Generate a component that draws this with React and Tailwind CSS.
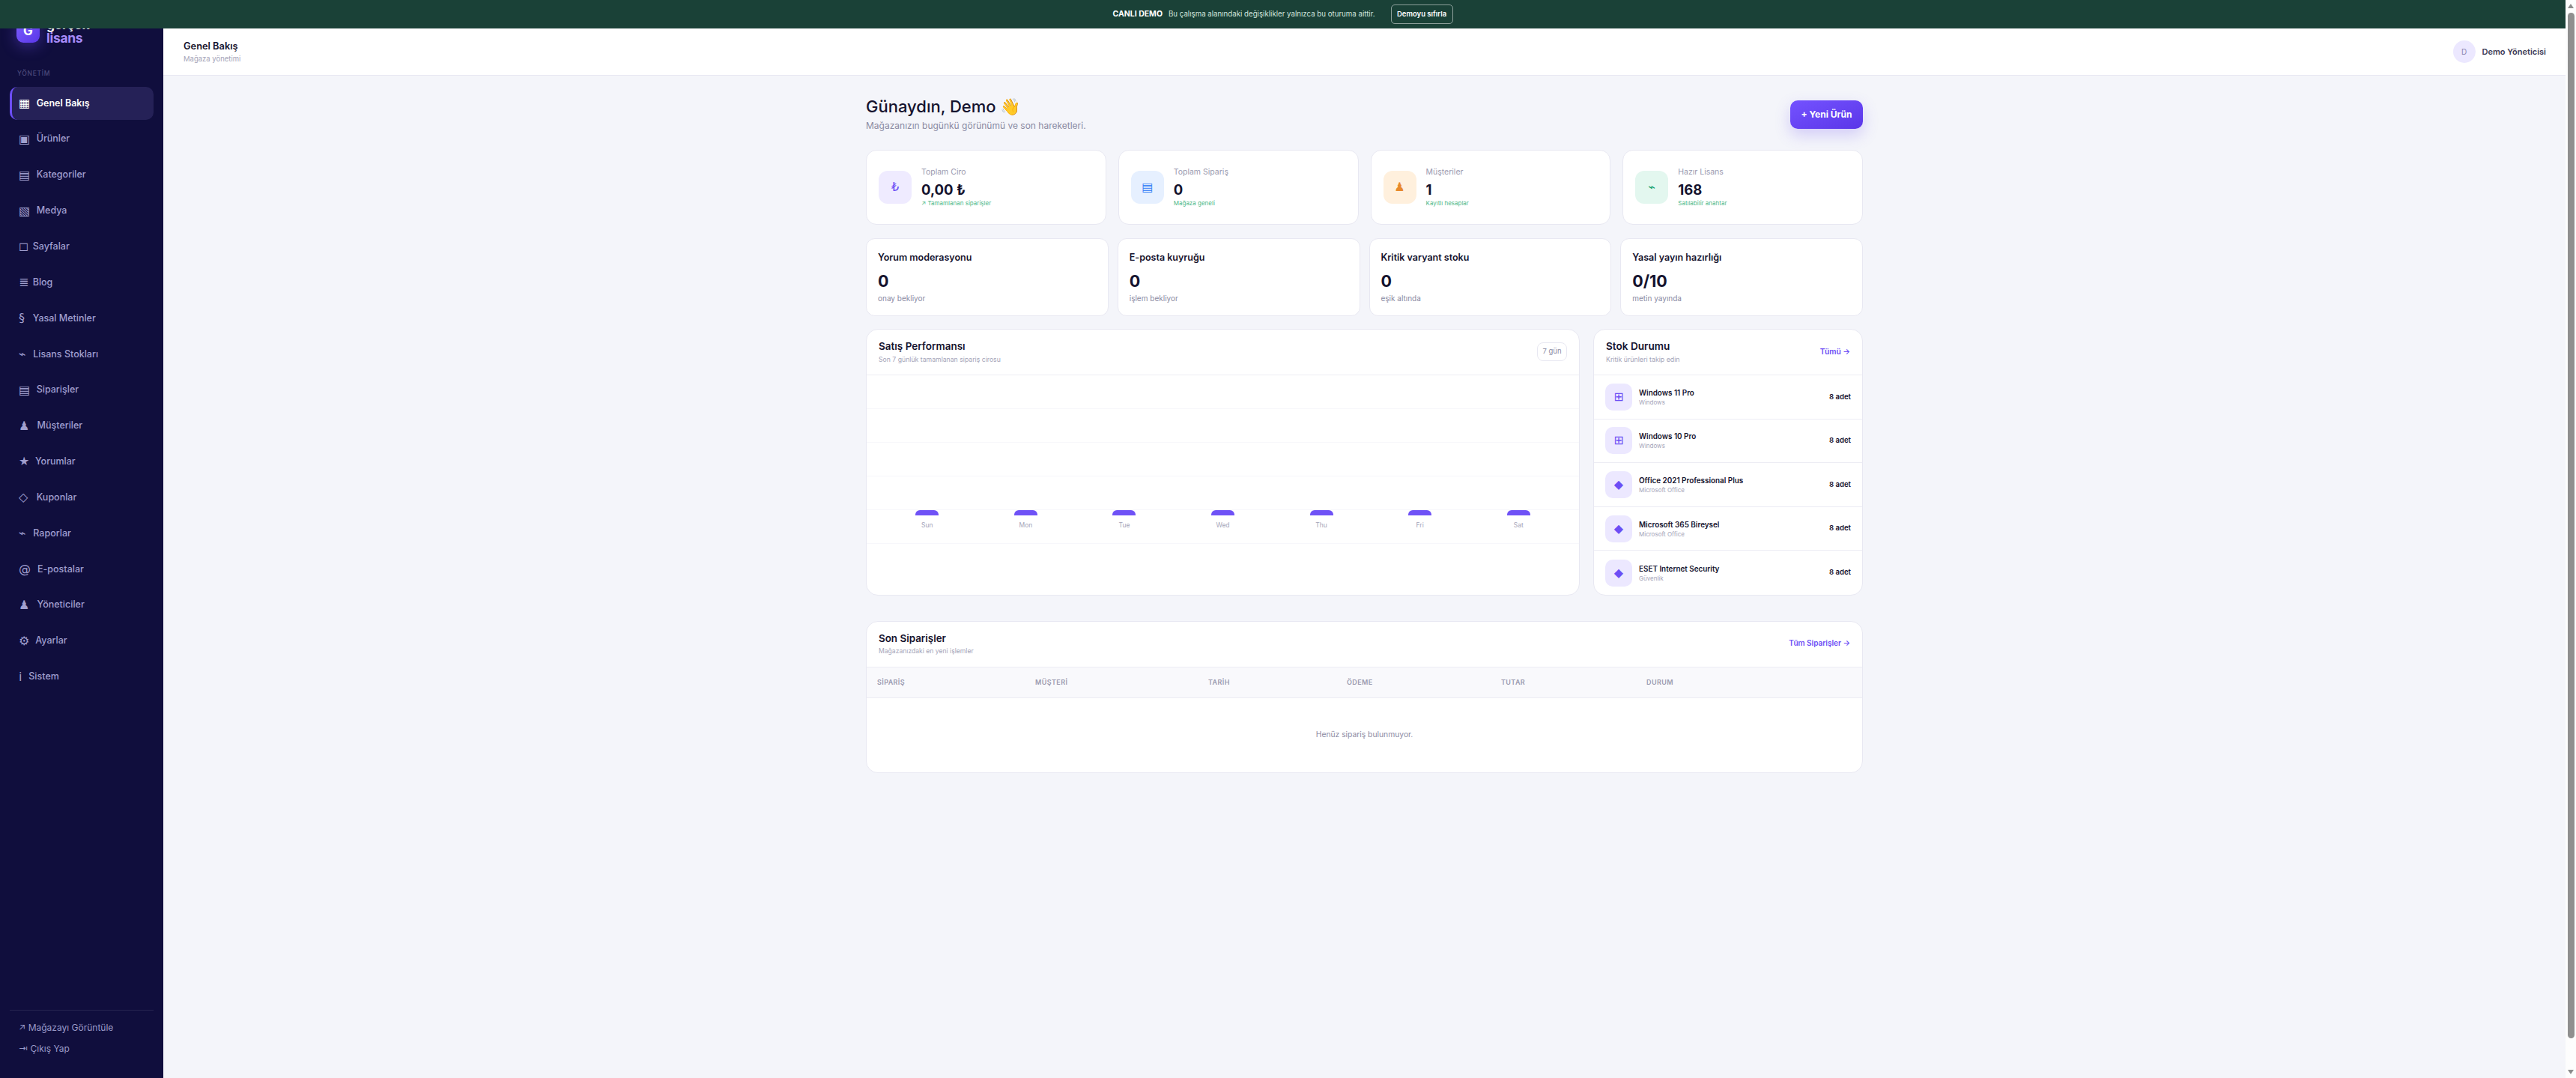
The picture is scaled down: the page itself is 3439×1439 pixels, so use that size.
import React from 'react';

// icon boxes differ per glyph, the label start follows the glyph width
const navItems = [
  { icon: '▦', box: 'w-[12.7px]', label: 'Genel Bakış', active: true },
  { icon: '▣', box: 'w-[12.7px]', label: 'Ürünler' },
  { icon: '▤', box: 'w-[12.7px]', label: 'Kategoriler' },
  { icon: '▧', box: 'w-[12.7px]', label: 'Medya' },
  { icon: '◻', box: 'w-[7.7px] text-[12px]', label: 'Sayfalar' },
  { icon: '≣', box: 'w-[7.7px] text-[12px]', label: 'Blog' },
  { icon: '§', box: 'w-[7.7px] text-[16px]', label: 'Yasal Metinler' },
  { icon: '⌁', box: 'w-[8.3px] text-[12px]', label: 'Lisans Stokları' },
  { icon: '▤', box: 'w-[12.7px]', label: 'Siparişler' },
  { icon: '♟', box: 'w-[13.6px]', label: 'Müşteriler' },
  { icon: '★', box: 'w-[11px]', label: 'Yorumlar' },
  { icon: '◇', box: 'w-[12.7px]', label: 'Kuponlar' },
  { icon: '⌁', box: 'w-[8.3px] text-[12px]', label: 'Raporlar' },
  { icon: '@', box: 'w-[14px]', label: 'E-postalar' },
  { icon: '♟', box: 'w-[13.6px]', label: 'Yöneticiler' },
  { icon: '⚙', box: 'w-[11.3px]', label: 'Ayarlar' },
  { icon: 'i', box: 'w-[2.3px]', label: 'Sistem' },
];

const stats = [
  { icon: '₺', box: 'bg-[#efebff] text-[#6c4ef5]', label: 'Toplam Ciro', value: '0,00 ₺', note: '↗ Tamamlanan siparişler' },
  { icon: '▤', box: 'bg-[#e6f0ff] text-[#3b82f6]', label: 'Toplam Sipariş', value: '0', note: 'Mağaza geneli' },
  { icon: '♟', box: 'bg-[#fff0dd] text-[#e8892b]', label: 'Müşteriler', value: '1', note: 'Kayıtlı hesaplar' },
  { icon: '⌁', box: 'bg-[#e3f7ef] text-[#0f9f6e]', label: 'Hazır Lisans', value: '168', note: 'Satılabilir anahtar' },
];

const checks = [
  { title: 'Yorum moderasyonu', value: '0', note: 'onay bekliyor' },
  { title: 'E-posta kuyruğu', value: '0', note: 'işlem bekliyor' },
  { title: 'Kritik varyant stoku', value: '0', note: 'eşik altında' },
  { title: 'Yasal yayın hazırlığı', value: '0/10', note: 'metin yayında' },
];

const days = ['Sun', 'Mon', 'Tue', 'Wed', 'Thu', 'Fri', 'Sat'];

const stock = [
  { icon: '⊞', name: 'Windows 11 Pro', cat: 'Windows' },
  { icon: '⊞', name: 'Windows 10 Pro', cat: 'Windows' },
  { icon: '◆', name: 'Office 2021 Professional Plus', cat: 'Microsoft Office' },
  { icon: '◆', name: 'Microsoft 365 Bireysel', cat: 'Microsoft Office' },
  { icon: '◆', name: 'ESET Internet Security', cat: 'Güvenlik' },
];

const columns = ['SİPARİŞ', 'MÜŞTERİ', 'TARİH', 'ÖDEME', 'TUTAR', 'DURUM'];

function Sidebar() {
  return (
    <aside className="w-[218px] flex-none flex flex-col overflow-hidden bg-[#100e3d]">
      {/* logo runs under the demo banner */}
      <div className="flex items-center gap-[9px] pl-[22px] -mt-[12px] h-[31px]">
        <div className="w-[31px] h-[31px] rounded-[9px] bg-gradient-to-br from-[#7c5cff] to-[#5b36e8] shadow-[0_4px_20px_rgba(108,78,245,0.45)] flex items-center justify-center text-white font-bold text-[17px]">
          G
        </div>
        <div className="font-bold text-[17.5px] leading-[18px] tracking-[-0.3px]">
          <div className="text-white">gerçek</div>
          <div className="text-[#a78bfa]">lisans</div>
        </div>
      </div>

      <div className="pl-[23px] mt-[35px] text-[8.5px] leading-[12px] tracking-[0.7px] text-[#4d4b7c] font-medium">YÖNETİM</div>

      <nav className="mt-[12px] px-[13px] flex flex-col gap-[3.85px]">
        {navItems.map((item) => (
          <div
            key={item.label}
            className={
              item.active
                ? 'h-[44px] flex items-center gap-[11px] pl-[9px] rounded-[10px] border-l-[3px] border-[#6c4ef5] bg-[#252157] text-white text-[12.5px] font-semibold'
                : 'h-[44px] flex items-center gap-[11px] pl-[12px] text-[#a09fcf] text-[12.5px] font-medium'
            }
          >
            <span className={`text-[16px] font-normal leading-none whitespace-nowrap font-['DejaVu_Sans',sans-serif] ${item.box}`}>{item.icon}</span>
            <span>{item.label}</span>
          </div>
        ))}
      </nav>

      <div className="mt-auto mx-[13px] mb-[30px] border-t border-[#25234f] pt-[14px] flex flex-col gap-[10px] text-[12px] leading-[18px] text-[#9a9ac8]">
        <div className="pl-[12px]">↗ Mağazayı Görüntüle</div>
        <div className="pl-[12px]">⇥ Çıkış Yap</div>
      </div>
    </aside>
  );
}

function StatCard({ item }) {
  return (
    <div className="h-[100px] flex items-center gap-[13px] pl-[16px] rounded-[14px] border border-[#e8e8f2] bg-white">
      <div className={`w-[44px] h-[44px] rounded-[12px] flex items-center justify-center text-[16px] font-['DejaVu_Sans',sans-serif] ${item.box}`}>{item.icon}</div>
      <div>
        <div className="text-[10.5px] leading-[14px] text-[#9a9aaf]">{item.label}</div>
        <div className="mt-[4px] text-[18.5px] leading-[24px] font-bold text-[#15132e]">{item.value}</div>
        <div className="text-[8px] leading-[12px] text-[#4fb98a]">{item.note}</div>
      </div>
    </div>
  );
}

function CheckCard({ item }) {
  return (
    <div className="h-[104px] pl-[15px] pt-[17px] rounded-[12px] border border-[#e8e8f2] bg-white">
      <div className="text-[12.5px] leading-[16px] font-semibold text-[#15132e]">{item.title}</div>
      <div className="mt-[8px] text-[21.5px] leading-[30px] font-bold text-[#15132e]">{item.value}</div>
      <div className="mt-[1px] text-[10px] leading-[14px] text-[#8b8ba3]">{item.note}</div>
    </div>
  );
}

function SalesChart() {
  return (
    <div className="rounded-[16px] border border-[#e8e8f2] bg-white overflow-hidden">
      <div className="h-[61px] flex items-center justify-between pl-[16px] pr-[16px] pb-[1px] border-b border-[#ececf4]">
        <div>
          <div className="text-[13.5px] leading-[18px] font-semibold text-[#15132e]">Satış Performansı</div>
          <div className="mt-[3px] text-[8.7px] leading-[12px] text-[#a4a4b8]">Son 7 günlük tamamlanan sipariş cirosu</div>
        </div>
        <div className="w-[40px] h-[25px] flex items-center justify-center rounded-[8px] border border-[#e8e8f2] text-[9.5px] text-[#8b8ba3]">7 gün</div>
      </div>
      <div className="h-[240px] px-[15px] pb-[34px] flex items-end bg-[linear-gradient(to_bottom,transparent_44px,#f7f7fb_44px)] bg-[size:100%_45px]">
        {days.map((day) => (
          <div key={day} className="flex-1 flex flex-col items-center">
            <div className="w-[31px] h-[7px] rounded-t-[6px] bg-[#6f52f6]" />
            <div className="mt-[7px] text-[8.5px] leading-[12px] text-[#a4a4b8]">{day}</div>
          </div>
        ))}
      </div>
    </div>
  );
}

function StockCard() {
  return (
    <div className="rounded-[16px] border border-[#e8e8f2] bg-white overflow-hidden">
      <div className="h-[61px] flex items-center justify-between pl-[16px] pr-[16px] pb-[1px] border-b border-[#ececf4]">
        <div>
          <div className="text-[13.6px] leading-[18px] font-semibold text-[#15132e]">Stok Durumu</div>
          <div className="mt-[3px] text-[8.8px] leading-[12px] text-[#a4a4b8]">Kritik ürünleri takip edin</div>
        </div>
        <div className="text-[10.2px] font-semibold text-[#6c4ef5]">Tümü →</div>
      </div>
      {stock.map((row) => (
        <div key={row.name} className="h-[58.6px] flex items-center px-[15px] border-b last:border-b-0 border-[#ececf4]">
          <div className="w-[36px] h-[36px] rounded-[10px] bg-[#ece8ff] text-[#6c4ef5] text-[16px] flex items-center justify-center font-['DejaVu_Sans',sans-serif]">{row.icon}</div>
          <div className="ml-[9px] flex-1">
            <div className="text-[9.9px] leading-[14px] font-semibold text-[#15132e]">{row.name}</div>
            <div className="text-[8px] leading-[12px] text-[#a4a4b8]">{row.cat}</div>
          </div>
          <div className="text-[9.6px] font-semibold text-[#15132e]">8 adet</div>
        </div>
      ))}
    </div>
  );
}

function RecentOrders() {
  return (
    <div className="mt-[34px] rounded-[16px] border border-[#e8e8f2] bg-white overflow-hidden">
      <div className="h-[61px] flex items-center justify-between pl-[16px] pr-[16px] pb-[2px] border-b border-[#ececf4]">
        <div>
          <div className="text-[13.4px] leading-[18px] font-semibold text-[#15132e]">Son Siparişler</div>
          <div className="mt-[2px] text-[8.6px] leading-[12px] text-[#a4a4b8]">Mağazanızdaki en yeni işlemler</div>
        </div>
        <div className="text-[10px] font-semibold text-[#6c4ef5]">Tüm Siparişler →</div>
      </div>
      <div className="h-[41px] grid grid-cols-[211px_231px_185px_206px_194px_1fr] items-center pl-[14px] bg-[#f9f9fc] border-b border-[#ececf4] text-[9px] font-semibold tracking-[0.4px] text-[#9a9aaf]">
        {columns.map((col) => (
          <div key={col}>{col}</div>
        ))}
      </div>
      <div className="h-[99px] pb-[2px] flex items-center justify-center text-[10.3px] text-[#8b8ba3]">Henüz sipariş bulunmuyor.</div>
    </div>
  );
}

function Scrollbar() {
  return (
    <div className="w-[14px] flex-none flex flex-col items-center bg-[#fdfdfd] py-[5px]">
      <div className="w-0 h-0 border-x-[4px] border-x-transparent border-b-[6px] border-b-[#8c8c8c]" />
      <div className="mt-[6px] w-[9px] flex-1 rounded-[5px] bg-[#8f8f8f]" />
      <div className="mt-[42px] w-0 h-0 border-x-[4px] border-x-transparent border-t-[6px] border-t-[#8c8c8c]" />
    </div>
  );
}

export default function App() {
  return (
    <div className="h-screen overflow-hidden flex bg-[#f4f5fa] font-['Inter',sans-serif]">
      <div className="flex-1 min-w-0 flex flex-col">
        <div className="h-[38px] flex-none flex items-center justify-center gap-[8px] bg-[#1a4137]">
          <span className="text-[10.5px] font-bold text-white">CANLI DEMO</span>
          <span className="text-[9.7px] text-[#d3e6df]">Bu çalışma alanındaki değişiklikler yalnızca bu oturuma aittir.</span>
          <button className="ml-[13px] w-[83px] h-[26px] rounded-[5px] border border-white/50 text-white font-semibold text-[9.5px]">Demoyu sıfırla</button>
        </div>

        <div className="flex flex-1 min-h-0">
          <Sidebar />

          <div className="flex-1 min-w-0">
            <header className="h-[63px] flex items-center justify-between pl-[27px] pr-[26px] bg-white border-b border-[#e8e8f2]">
              <div>
                <div className="text-[12.8px] leading-[18px] font-semibold text-[#15132e]">Genel Bakış</div>
                <div className="mt-[1px] text-[9.5px] leading-[14px] text-[#a4a4b8]">Mağaza yönetimi</div>
              </div>
              <div className="flex items-center gap-[9px]">
                <div className="w-[30px] h-[30px] rounded-full bg-[#ece8ff] flex items-center justify-center text-[10px] text-[#8a84b0]">D</div>
                <div className="text-[11px] font-semibold text-[#3d3b55]">Demo Yöneticisi</div>
              </div>
            </header>

            <main className="w-[1331px] mx-auto pt-[26px]">
              <div className="flex items-center justify-between">
                <div>
                  <h1 className="text-[22px] leading-[30px] font-medium text-[#15132e]">Günaydın, Demo 👋</h1>
                  <p className="mt-[1px] text-[12px] leading-[20px] text-[#8b8ba3]">Mağazanızın bugünkü görünümü ve son hareketleri.</p>
                </div>
                <button className="w-[97px] h-[38px] rounded-[10px] bg-gradient-to-br from-[#7452ff] to-[#5b36e8] shadow-[0_8px_20px_rgba(108,78,245,0.25)] text-white text-[12px] font-bold">+ Yeni Ürün</button>
              </div>

              <div className="mt-[22px] grid grid-cols-4 gap-[16px]">
                {stats.map((item) => (
                  <StatCard key={item.label} item={item} />
                ))}
              </div>

              <div className="mt-[18px] grid grid-cols-4 gap-[12px]">
                {checks.map((item) => (
                  <CheckCard key={item.title} item={item} />
                ))}
              </div>

              <div className="mt-[17px] grid grid-cols-[1fr_360px] gap-[18px]">
                <SalesChart />
                <StockCard />
              </div>

              <RecentOrders />
            </main>
          </div>
        </div>
      </div>
      <Scrollbar />
    </div>
  );
}
